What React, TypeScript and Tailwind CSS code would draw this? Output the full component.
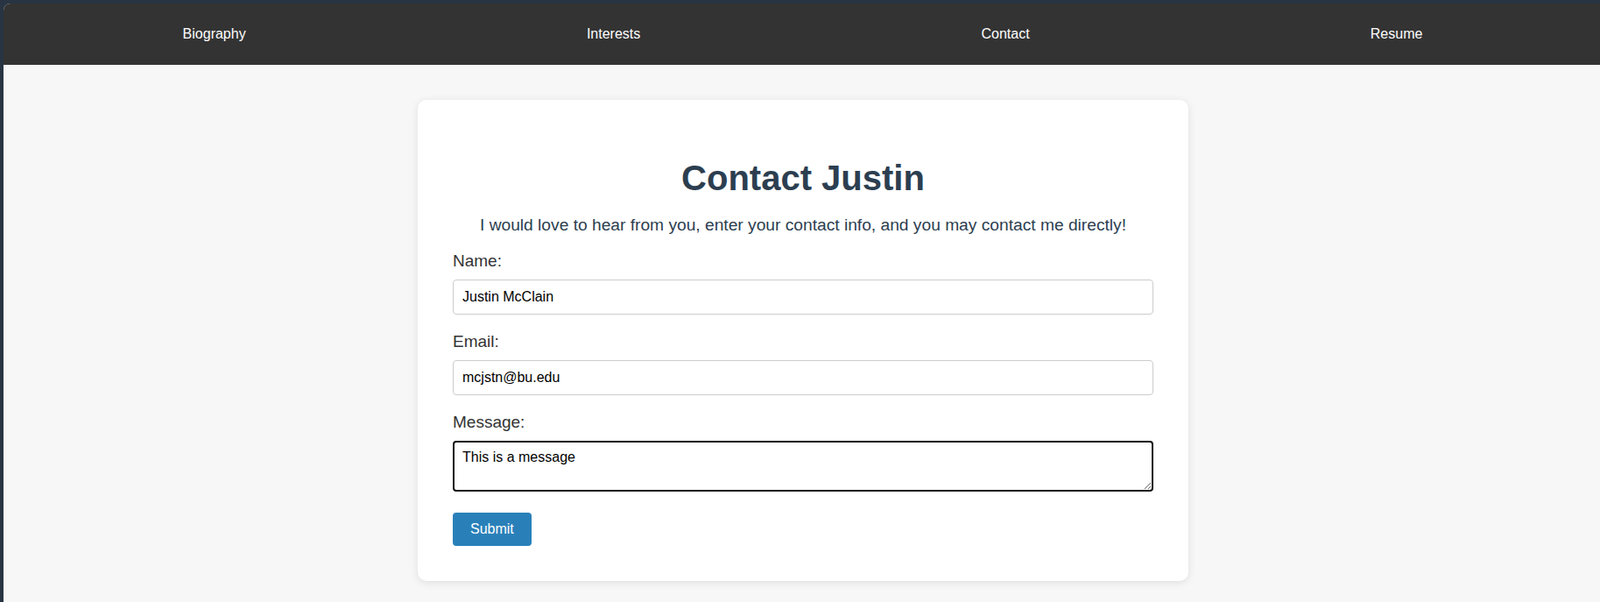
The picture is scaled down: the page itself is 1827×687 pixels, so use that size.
import React from 'react';

const links = ['Biography', 'Interests', 'Contact', 'Resume'];

export default function App() {
  const [name, setName] = React.useState('Justin McClain');
  const [email, setEmail] = React.useState('mcjstn@bu.edu');
  const [message, setMessage] = React.useState('This is a message');

  return (
    <div
      className="h-screen bg-[#283442] pl-[4px] pt-[4px]"
      style={{ fontFamily: '"Liberation Sans", Arial, sans-serif' }}
    >
      <div className="h-full overflow-hidden rounded-tl-[8px] bg-[#f7f7f7]">
        <nav className="flex h-[70px] items-center justify-around bg-[#333333] pl-[10px] pr-[8px]">
          {links.map((link) => (
            <a key={link} href="#" className="text-[16px] text-white">
              {link}
            </a>
          ))}
        </nav>

        {/* Contact card */}
        <div className="pl-[3px]">
          <div className="mx-auto mt-10 w-[880px] rounded-[10px] bg-white p-10 shadow-[0_2px_10px_rgba(0,0,0,0.1)]">
            <h1 className="mt-[26px] text-center text-[40px] font-bold leading-[46px] text-[#2c3e50]">
              Contact Justin
            </h1>
            <p className="mt-[20px] mb-[19px] text-center text-[19.2px] leading-[22px] text-[#2c3e50]">
              I would love to hear from you, enter your contact info, and you may contact me directly!
            </p>

            <form onSubmit={(e) => e.preventDefault()}>
              <div className="mb-5">
                <label className="mb-[10px] block text-[19px] leading-[22px] text-[#333]">Name:</label>
                <input
                  value={name}
                  onChange={(e) => setName(e.target.value)}
                  className="block h-[40px] w-full rounded-[4px] border border-[#ccc] px-[10px] text-[16px] text-black outline-none"
                />
              </div>
              <div className="mb-5">
                <label className="mb-[10px] block text-[19px] leading-[22px] text-[#333]">Email:</label>
                <input
                  value={email}
                  onChange={(e) => setEmail(e.target.value)}
                  className="block h-[40px] w-full rounded-[4px] border border-[#ccc] px-[10px] text-[16px] text-black outline-none"
                />
              </div>
              <div>
                <label className="mb-[10px] block text-[19px] leading-[22px] text-[#333]">Message:</label>
                <textarea
                  value={message}
                  onChange={(e) => setMessage(e.target.value)}
                  className="block h-[58px] w-full rounded-[4px] border-2 border-[#111] px-[9px] py-[8px] text-[16px] leading-[18px] text-black outline-none"
                />
              </div>
              <button
                type="submit"
                className="mt-[24px] h-[38px] rounded-[4px] bg-[#2980b9] px-5 text-[16px] text-white"
              >
                Submit
              </button>
            </form>
          </div>
        </div>
      </div>
    </div>
  );
}
